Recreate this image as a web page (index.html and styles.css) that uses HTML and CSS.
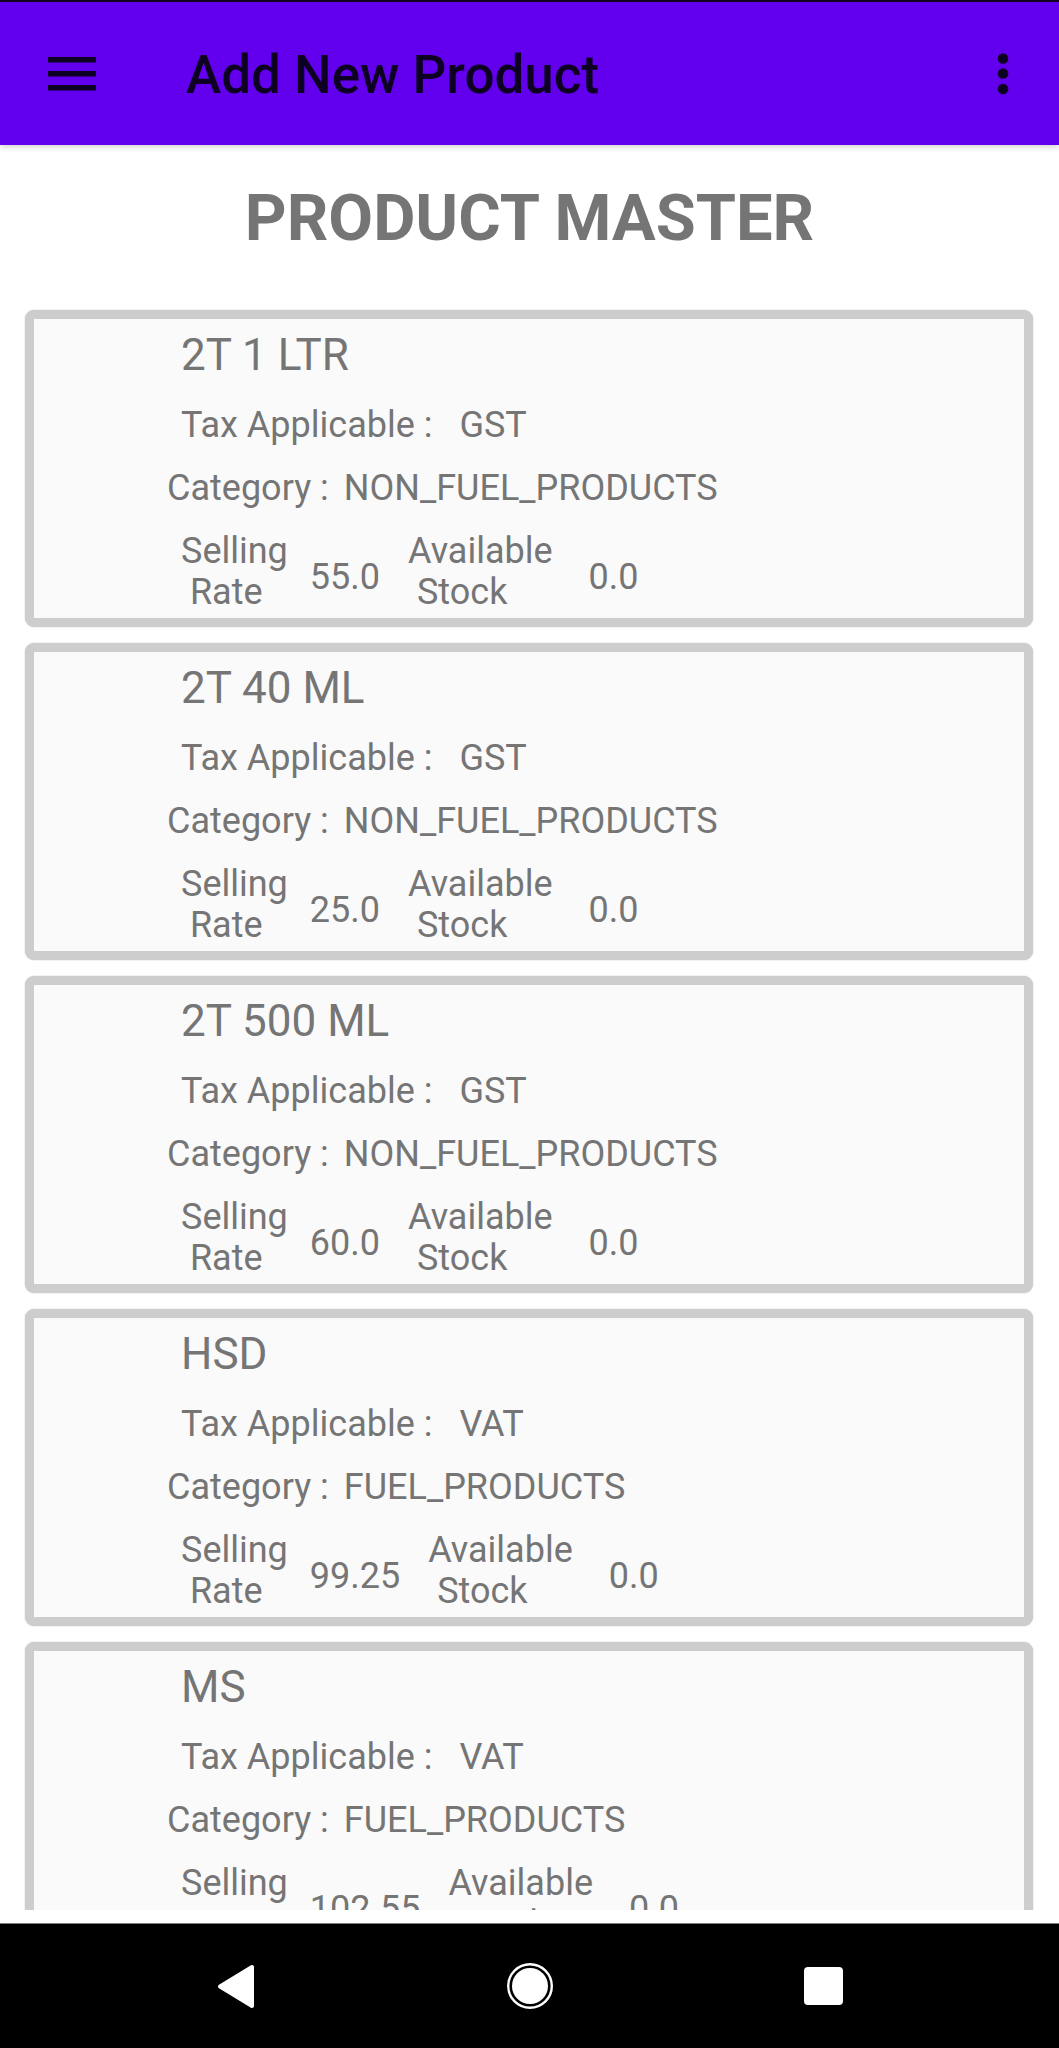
FILE: index.html
```html
<!DOCTYPE html>
<html lang="en">
<head>
<meta charset="utf-8">
<title>Add New Product</title>
<link rel="stylesheet" href="styles.css">
</head>
<body>
<div class="screen">
  <header class="appbar">
    <svg class="menu-icon" width="48" height="34" viewBox="0 0 48 34"><rect x="0" y="0" width="48" height="5.5" fill="#0d0022"/><rect x="0" y="14" width="48" height="5.5" fill="#0d0022"/><rect x="0" y="28" width="48" height="5.5" fill="#0d0022"/></svg>
    <h1 class="appbar-title">Add New Product</h1>
    <svg class="more-icon" width="12" height="42" viewBox="0 0 12 42"><circle cx="6" cy="5.5" r="5.3" fill="#0d0022"/><circle cx="6" cy="20.5" r="5.3" fill="#0d0022"/><circle cx="6" cy="36" r="5.3" fill="#0d0022"/></svg>
  </header>

  <main class="content">
    <h2 class="page-title">PRODUCT MASTER</h2>
    <div class="list">
      <div class="card">
        <div class="name">2T 1 LTR</div>
        <div class="row tax"><span>Tax Applicable :</span><span class="tax-val">GST</span></div>
        <div class="row cat"><span>Category :</span><span class="cat-val">NON_FUEL_PRODUCTS</span></div>
        <div class="stats"><span class="label l1">Selling
 Rate</span><span class="val v1">55.0</span><span class="label l2">Available
 Stock</span><span class="val v2">0.0</span></div>
      </div>
      <div class="card">
        <div class="name">2T 40 ML</div>
        <div class="row tax"><span>Tax Applicable :</span><span class="tax-val">GST</span></div>
        <div class="row cat"><span>Category :</span><span class="cat-val">NON_FUEL_PRODUCTS</span></div>
        <div class="stats"><span class="label l1">Selling
 Rate</span><span class="val v1">25.0</span><span class="label l2">Available
 Stock</span><span class="val v2">0.0</span></div>
      </div>
      <div class="card">
        <div class="name">2T 500 ML</div>
        <div class="row tax"><span>Tax Applicable :</span><span class="tax-val">GST</span></div>
        <div class="row cat"><span>Category :</span><span class="cat-val">NON_FUEL_PRODUCTS</span></div>
        <div class="stats"><span class="label l1">Selling
 Rate</span><span class="val v1">60.0</span><span class="label l2">Available
 Stock</span><span class="val v2">0.0</span></div>
      </div>
      <div class="card">
        <div class="name">HSD</div>
        <div class="row tax"><span>Tax Applicable :</span><span class="tax-val">VAT</span></div>
        <div class="row cat"><span>Category :</span><span class="cat-val">FUEL_PRODUCTS</span></div>
        <div class="stats"><span class="label l1">Selling
 Rate</span><span class="val v1">99.25</span><span class="label l2">Available
 Stock</span><span class="val v2">0.0</span></div>
      </div>
      <div class="card">
        <div class="name">MS</div>
        <div class="row tax"><span>Tax Applicable :</span><span class="tax-val">VAT</span></div>
        <div class="row cat"><span>Category :</span><span class="cat-val">FUEL_PRODUCTS</span></div>
        <div class="stats"><span class="label l1">Selling
 Rate</span><span class="val v1">102.55</span><span class="label l2">Available
 Stock</span><span class="val v2">0.0</span></div>
      </div>
    </div>
  </main>
  <div class="spacer"></div>

  <nav class="navbar">
    <div class="nav-btn"><svg width="40" height="45" viewBox="0 0 40 45"><polygon points="4,22.5 36,3 36,42" fill="#fff" stroke="#fff" stroke-width="4" stroke-linejoin="round"/></svg></div>
    <div class="nav-btn"><svg width="48" height="48" viewBox="0 0 48 48"><circle cx="24" cy="24" r="21.8" fill="none" stroke="#fff" stroke-width="2.4"/><circle cx="24" cy="24" r="18" fill="#fff"/></svg></div>
    <div class="nav-btn"><div class="recents"></div></div>
  </nav>
</div>
</body>
</html>
```

FILE: styles.css
```css
* { box-sizing: border-box; }

html, body {
  margin: 0;
  padding: 0;
  background: #ffffff;
}

body {
  font-family: Roboto, "Liberation Sans", Arial, sans-serif;
}

.screen {
  width: 1059px;
  height: 2048px;
  display: flex;
  flex-direction: column;
  overflow: hidden;
}

.appbar {
  flex: 0 0 145px;
  background: #6200ee;
  border-top: 2px solid #120020;
  display: flex;
  align-items: center;
  padding-left: 48px;
  padding-right: 50px;
  position: relative;
  z-index: 2;
  box-shadow: 0 2px 6px rgba(0, 0, 0, 0.18);
}

.menu-icon {
  display: block;
  margin-top: 0;
}

.appbar-title {
  margin: 3px 0 0 90px;
  font-size: 53px;
  font-weight: 500;
  color: #0d0022;
  line-height: 60px;
  flex: 1;
}

.more-icon {
  display: block;
  margin-top: 1px;
}

.content {
  flex: 0 0 1765px;
  overflow: hidden;
  display: flex;
  flex-direction: column;
}

.page-title {
  margin: 36px 0 0 0;
  text-align: center;
  font-size: 65px;
  line-height: 75px;
  font-weight: 700;
  color: #757575;
}

.list {
  margin-top: 54px;
  padding: 0 26px 0 25px;
  display: flex;
  flex-direction: column;
  gap: 16px;
}

.card {
  flex: 0 0 317px;
  height: 317px;
  border: 9px solid #cdcdcd;
  border-radius: 9px;
  background: #fafafa;
  box-shadow: 0 0 1.5px rgba(0, 0, 0, 0.25);
  padding: 12px 0 5px 0;
  color: #757575;
  font-size: 36px;
}

.name {
  font-size: 44px;
  line-height: 48px;
  padding-left: 147px;
}

.row {
  line-height: 44px;
  display: flex;
}

.tax {
  margin-top: 24px;
  padding-left: 147px;
}

.tax-val {
  margin-left: 27px;
}

.cat {
  margin-top: 19px;
  padding-left: 133px;
}

.cat-val {
  margin-left: 15px;
}

.stats {
  margin-top: 21px;
  padding-left: 147px;
  display: flex;
  align-items: flex-start;
  line-height: 41px;
}

.label {
  white-space: pre;
}

.val {
  padding-top: 26px;
}

.l1 { margin-right: 22px; }
.v1 { margin-right: 28px; }
.l2 { margin-right: 36px; }

.spacer {
  flex: 0 0 13px;
  background: #ffffff;
}

.navbar {
  flex: 0 0 125px;
  background: #000000;
  border-top: 1px solid #7a7a7a;
  display: flex;
  justify-content: center;
  align-items: center;
  gap: 214px;
}

.nav-btn {
  width: 80px;
  display: flex;
  justify-content: center;
  align-items: center;
}

.nav-btn svg {
  display: block;
}

.recents {
  width: 39px;
  height: 38px;
  background: #ffffff;
  border-radius: 4px;
}
```
